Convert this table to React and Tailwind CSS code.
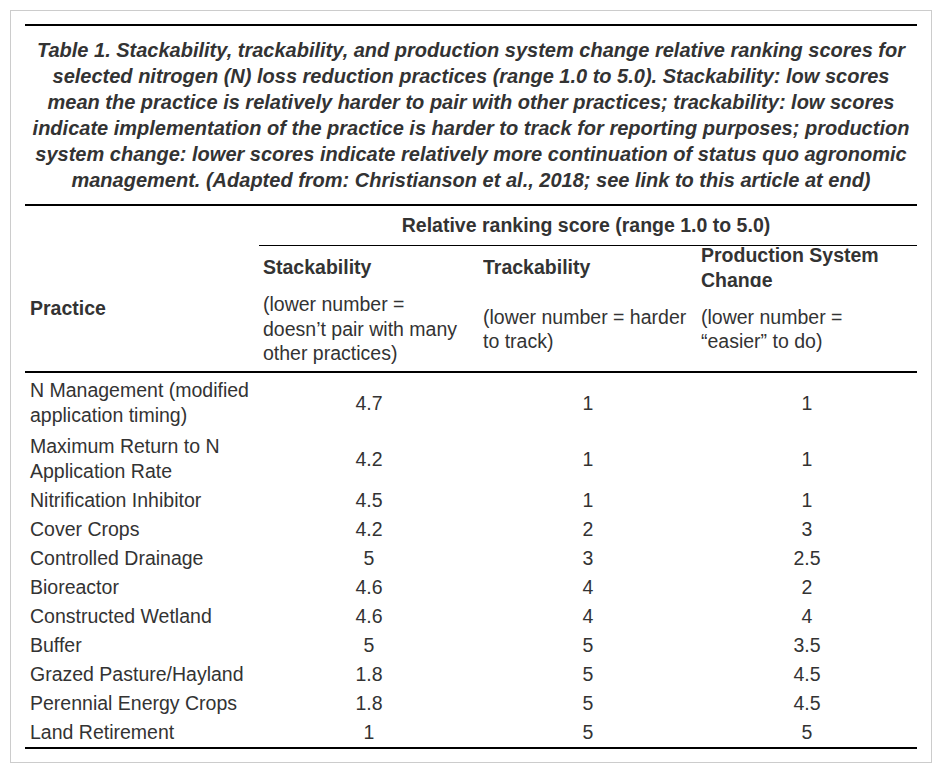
const rows = [
  { name: ['N Management (modified', 'application timing)'], s: '4.7', t: '1', p: '1', pad: 'pt-[5px] pb-[2px]' },
  { name: ['Maximum Return to N', 'Application Rate'], s: '4.2', t: '1', p: '1', pad: 'pt-[4px] pb-[2px]' },
  { name: ['Nitrification Inhibitor'], s: '4.5', t: '1', p: '1' },
  { name: ['Cover Crops'], s: '4.2', t: '2', p: '3' },
  { name: ['Controlled Drainage'], s: '5', t: '3', p: '2.5' },
  { name: ['Bioreactor'], s: '4.6', t: '4', p: '2' },
  { name: ['Constructed Wetland'], s: '4.6', t: '4', p: '4' },
  { name: ['Buffer'], s: '5', t: '5', p: '3.5' },
  { name: ['Grazed Pasture/Hayland'], s: '1.8', t: '5', p: '4.5' },
  { name: ['Perennial Energy Crops'], s: '1.8', t: '5', p: '4.5' },
  { name: ['Land Retirement'], s: '1', t: '5', p: '5' },
]

const caption = [
  'Table 1. Stackability, trackability, and production system change relative ranking scores for',
  'selected nitrogen (N) loss reduction practices (range 1.0 to 5.0). Stackability: low scores',
  'mean the practice is relatively harder to pair with other practices; trackability: low scores',
  'indicate implementation of the practice is harder to track for reporting purposes; production',
  'system change: lower scores indicate relatively more continuation of status quo agronomic',
  'management. (Adapted from: Christianson et al., 2018; see link to this article at end)',
]

const grid = 'grid grid-cols-[234px_220px_218px_220px]'

function HeadCell({ title, desc }) {
  return (
    <div className="flex flex-col pl-[4px] pr-[2px]">
      <div className="h-[41px] pt-[2px] overflow-hidden">
        <div className="h-[39px] flex items-center font-bold">
          <div>{title.map((l, i) => <div key={i}>{l}</div>)}</div>
        </div>
      </div>
      <div className="flex-1 flex items-center leading-[24.5px]">
        <div>{desc.map((l, i) => <div key={i}>{l}</div>)}</div>
      </div>
    </div>
  )
}

export default function App() {
  return (
    <div className="min-h-screen bg-white p-[10px] text-[#333333] text-[19.5px] leading-[25px]" style={{ fontFamily: '"Liberation Sans", Arial, sans-serif' }}>
      <div className="border border-[#cccccc] px-[14px] pt-[13px] pb-[13px]">
        {/* Caption */}
        <div className="border-t-2 border-black py-[11px] text-center font-bold italic text-[20px] leading-[26px] whitespace-nowrap">
          {caption.map((l, i) => <div key={i}>{l}</div>)}
        </div>

        {/* Header */}
        <div className="border-t-2 border-black">
          <div className={grid}>
            <div />
            <div className="col-span-3 h-[40px] border-b border-black flex items-center justify-center font-bold pr-[4px]">
              Relative ranking score (range 1.0 to 5.0)
            </div>
          </div>
          <div className={`${grid} h-[125px]`}>
            <div className="flex items-center pl-[5px] font-bold">Practice</div>
            <HeadCell title={['Stackability']} desc={['(lower number =', 'doesn’t pair with many', 'other practices)']} />
            <HeadCell title={['Trackability']} desc={['(lower number = harder', 'to track)']} />
            <HeadCell title={['Production System', 'Change']} desc={['(lower number =', '“easier” to do)']} />
          </div>
        </div>

        {/* Body */}
        <div className="border-t-2 border-b-2 border-black">
          {rows.map((r, i) => (
            <div key={i} className={`${grid} ${r.pad || 'py-[2px]'}`}>
              <div className="pl-[5px]">{r.name.map((l, j) => <div key={j}>{l}</div>)}</div>
              <div className="flex items-center justify-center">{r.s}</div>
              <div className="flex items-center justify-center">{r.t}</div>
              <div className="flex items-center justify-center">{r.p}</div>
            </div>
          ))}
        </div>
      </div>
    </div>
  )
}
